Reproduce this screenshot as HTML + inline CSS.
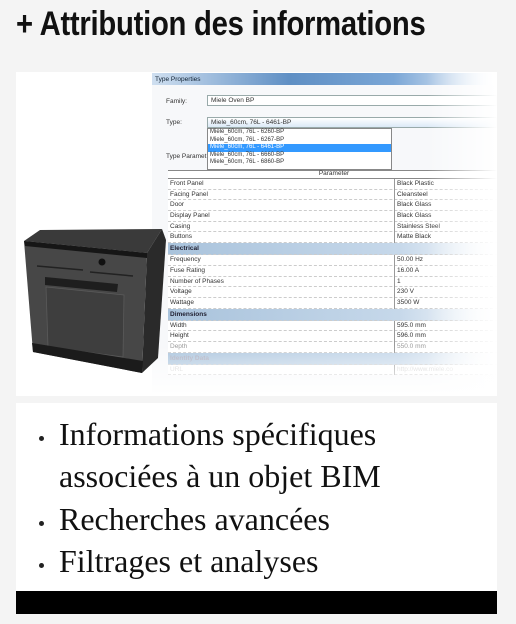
<!DOCTYPE html>
<html><head><meta charset="utf-8"><style>
*{margin:0;padding:0;box-sizing:border-box}
body{width:516px;height:624px;background:#f4f4f4;position:relative;overflow:hidden;font-family:"Liberation Sans",sans-serif}
.title{position:absolute;left:16px;top:5px;font-size:34px;font-weight:bold;color:#111;white-space:nowrap;transform:scaleX(0.86);transform-origin:left top;letter-spacing:-0.3px}
.img{position:absolute;left:16px;top:72px;width:481px;height:324px;background:#fff;overflow:hidden}
.dlg{position:absolute;left:136px;top:1px;width:345px;height:322px;background:#f7f8fa;font-size:6.5px;color:#333}
.bar{position:absolute;left:0;top:0;width:100%;height:12px;background:linear-gradient(90deg,#cfdff0,#5f8fc4 40%,#7aa6d6 70%,#fff)}
.lab{position:absolute;color:#333}
.box{position:absolute;background:#fff;border:1px solid #9aa;}
.tbl{position:absolute;left:16px;top:97px;width:330px;background:#fff;border-top:1px solid #888}
.r{height:10.7px;border-bottom:1px dashed #ccc;position:relative;line-height:10px;padding-left:2px}
.r span{position:absolute;left:226px;top:0;border-left:1px solid #999;padding-left:2px;height:10.7px}
.h{background:linear-gradient(90deg,#a9c3dc,#c6d8ea 70%,#fff);font-weight:bold;color:#223;height:12px;line-height:12px}
.fade{position:absolute;right:0;top:0;width:70px;height:100%;background:linear-gradient(90deg,rgba(255,255,255,0),#fff)}
.fadeb{position:absolute;left:0;bottom:0;width:100%;height:50px;background:linear-gradient(rgba(255,255,255,0),#fff)}
.txt{position:absolute;left:16px;top:403px;width:481px;height:188px;background:#fff}
ul{list-style:none;font-family:"Liberation Serif",serif;font-size:32px;color:#111}
li{position:absolute;left:43px;line-height:42px;white-space:nowrap}
li.b:before{content:"";position:absolute;left:-20px;top:23px;width:5px;height:5px;border-radius:50%;background:#222}
.blk{position:absolute;left:16px;top:591px;width:481px;height:23px;background:#000}
</style></head><body>
<div class="title">+ Attribution des informations</div>
<div class="img">
 <div class="dlg">
  <div class="bar"></div>
  <div class="lab" style="left:3px;top:3px;color:#123">Type Properties</div>
  <div class="lab" style="left:14px;top:25px">Family:</div>
  <div class="box" style="left:55px;top:22px;width:290px;height:11px;padding-left:3px;line-height:9px">Miele Oven BP</div>
  <div class="lab" style="left:14px;top:46px">Type:</div>
  <div class="box" style="left:55px;top:44px;width:290px;height:11px;padding-left:3px;line-height:9px;background:linear-gradient(#fff,#dbe9f7)">Miele_60cm, 76L - 6461-BP</div>
  <div class="lab" style="left:14px;top:80px">Type Paramet</div>
  <div class="box" style="left:55px;top:55px;width:185px;height:42px;border-color:#888;line-height:7.6px;padding-left:2px;font-size:6px">Miele_60cm, 76L - 6260-BP<br>Miele_60cm, 76L - 6267-BP<br><span style="background:#3399ff;color:#fff;display:block;margin-left:-2px;padding-left:2px">Miele_60cm, 76L - 6461-BP</span>Miele_60cm, 76L - 6660-BP<br>Miele_60cm, 76L - 6860-BP</div>
  <div class="tbl">
   <div class="r" style="text-align:center;height:8px;line-height:6px;border-bottom:1px solid #888">Parameter</div>
   <div class="r">Front Panel<span>Black Plastic</span></div>
   <div class="r">Facing Panel<span>Cleansteel</span></div>
   <div class="r">Door<span>Black Glass</span></div>
   <div class="r">Display Panel<span>Black Glass</span></div>
   <div class="r">Casing<span>Stainless Steel</span></div>
   <div class="r">Buttons<span>Matte Black</span></div>
   <div class="r h">Electrical</div>
   <div class="r">Frequency<span>50.00 Hz</span></div>
   <div class="r">Fuse Rating<span>16.00 A</span></div>
   <div class="r">Number of Phases<span>1</span></div>
   <div class="r">Voltage<span>230 V</span></div>
   <div class="r">Wattage<span>3500 W</span></div>
   <div class="r h">Dimensions</div>
   <div class="r">Width<span>595.0 mm</span></div>
   <div class="r">Height<span>596.0 mm</span></div>
   <div class="r" style="color:#999">Depth<span>550.0 mm</span></div>
   <div class="r h" style="color:#aab">Identity Data</div>
   <div class="r" style="color:#ccc">URL<span>http://www.miele.co</span></div>
  </div>
  <div class="fade"></div>
  <div class="fadeb"></div>
 </div>
</div>
<svg style="position:absolute;left:0;top:0" width="200" height="400">
 <polygon points="24,241 40,230 162,229 147,253" fill="#3a3a3a"/>
 <polygon points="147,253 162,229 166,240 158,358 142,373" fill="#2a2a2a"/>
 <polygon points="24,241 147,253 142,373 33,352" fill="#474747"/>
 <polygon points="24,241 147,253 147,258 25,246" fill="#161616"/>
 <polygon points="45,277 118,284 117,292 45,285" fill="#1e1e1e"/>
 <polygon points="46,287 124,295 123,357 48,347" fill="#3e3e3e" stroke="#5a5a5a" stroke-width="0.8"/>
 <polygon points="32,343 143,361 142,373 33,352" fill="#1b1b1b"/>
 <circle cx="102" cy="262" r="3.5" fill="#111"/>
 <line x1="37" y1="266" x2="83" y2="270" stroke="#222" stroke-width="1.5"/>
 <line x1="90" y1="272" x2="133" y2="276" stroke="#222" stroke-width="1.5"/>
</svg>
<div class="txt"><ul>
 <li class="b" style="top:10px">Informations spécifiques</li>
 <li style="top:52px">associées à un objet BIM</li>
 <li class="b" style="top:95px">Recherches avancées</li>
 <li class="b" style="top:137px">Filtrages et analyses</li>
</ul></div>
<div class="blk"></div>
</body></html>
